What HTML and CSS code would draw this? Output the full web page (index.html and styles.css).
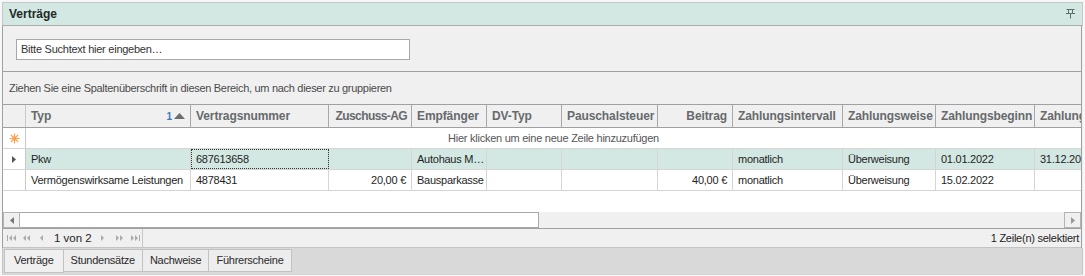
FILE: index.html
```html
<!DOCTYPE html>
<html lang="de">
<head>
<meta charset="utf-8">
<title>Verträge</title>
<link rel="stylesheet" href="styles.css">
</head>
<body>
<div class="window">
  <div class="titlebar">
    <span class="title">Verträge</span>
    <svg class="pin" width="9" height="10" viewBox="0 0 9 10"><path d="M0.5 0.5h8M2.5 0.5v4M6.5 0.5v4M0 4.5h9M4.5 4.5v5" stroke="#5d6f68" stroke-width="1" fill="none"/></svg>
  </div>
  <div class="panel">
    <div class="searcharea">
      <div class="searchbox">Bitte Suchtext hier eingeben…</div>
    </div>
    <div class="grouppanel">Ziehen Sie eine Spaltenüberschrift in diesen Bereich, um nach dieser zu gruppieren</div>
    <div class="grid">
      <div class="row header">
        <div class="c ind"></div>
        <div class="c typ">Typ<span class="sort"><span class="sortnum">1</span><svg width="11" height="6" viewBox="0 0 11 6"><path d="M5.5 0L11 6H0Z" fill="#6e6e6e"/></svg></span></div>
        <div class="c">Vertragsnummer</div>
        <div class="c r tight">Zuschuss-AG</div>
        <div class="c">Empfänger</div>
        <div class="c">DV-Typ</div>
        <div class="c">Pauschalsteuer</div>
        <div class="c r">Beitrag</div>
        <div class="c">Zahlungsintervall</div>
        <div class="c">Zahlungsweise</div>
        <div class="c">Zahlungsbeginn</div>
        <div class="c last">Zahlungsende</div>
      </div>
      <div class="row newrow">
        <div class="c ind"><svg width="11" height="11" viewBox="0 0 11 11"><g stroke="#f7a24f" stroke-width="1.2"><path d="M5.5 0.5v2.5M5.5 8v2.5M0.5 5.5h2.5M8 5.5h2.5M2 2l1.8 1.8M7.2 7.2L9 9M9 2L7.2 3.8M3.8 7.2L2 9"/></g><circle cx="5.5" cy="5.5" r="2.4" fill="#f7a24f"/></svg></div>
        <div class="newtext">Hier klicken um eine neue Zeile hinzuzufügen</div>
      </div>
      <div class="row data sel">
        <div class="c ind"><svg width="4" height="7" viewBox="0 0 4 7"><path d="M0 0L4 3.5L0 7Z" fill="#555"/></svg></div>
        <div class="c">Pkw</div>
        <div class="c focus">687613658</div>
        <div class="c r"></div>
        <div class="c">Autohaus M…</div>
        <div class="c"></div>
        <div class="c"></div>
        <div class="c r"></div>
        <div class="c">monatlich</div>
        <div class="c">Überweisung</div>
        <div class="c">01.01.2022</div>
        <div class="c last">31.12.2022</div>
      </div>
      <div class="row data">
        <div class="c ind"></div>
        <div class="c">Vermögenswirksame Leistungen</div>
        <div class="c">4878431</div>
        <div class="c r">20,00 €</div>
        <div class="c">Bausparkasse</div>
        <div class="c"></div>
        <div class="c"></div>
        <div class="c r">40,00 €</div>
        <div class="c">monatlich</div>
        <div class="c">Überweisung</div>
        <div class="c">15.02.2022</div>
        <div class="c last"></div>
      </div>
      <div class="gridempty"></div>
    </div>
    <div class="hscroll">
      <div class="sbtn"><svg width="4" height="7" viewBox="0 0 4 7"><path d="M4 0L0 3.5L4 7Z" fill="#777"/></svg></div>
      <div class="thumb"></div>
      <div class="track"></div>
      <div class="sbtn"><svg width="4" height="7" viewBox="0 0 4 7"><path d="M0 0L4 3.5L0 7Z" fill="#999"/></svg></div>
    </div>
    <div class="statusbar">
      <div class="pager">
        <svg class="pi p1" width="9" height="6" viewBox="0 0 9 6"><path d="M0.5 0v6" stroke="#aaa"/><path d="M5 0L2 3L5 6ZM9 0L6 3L9 6Z" fill="#aaa"/></svg>
        <svg class="pi p2" width="8" height="6" viewBox="0 0 8 6"><path d="M4 0L1 3L4 6ZM8 0L5 3L8 6Z" fill="#aaa"/></svg>
        <svg class="pi p3" width="4" height="6" viewBox="0 0 4 6"><path d="M3 0L0 3L3 6Z" fill="#aaa"/></svg>
        <span class="pagetext">1 von 2</span>
        <svg class="pi p4" width="4" height="6" viewBox="0 0 4 6"><path d="M0 0L3 3L0 6Z" fill="#aaa"/></svg>
        <svg class="pi p5" width="8" height="6" viewBox="0 0 8 6"><path d="M0 0L3 3L0 6ZM4 0L7 3L4 6Z" fill="#aaa"/></svg>
        <svg class="pi p6" width="9" height="6" viewBox="0 0 9 6"><path d="M0 0L3 3L0 6ZM4 0L7 3L4 6Z" fill="#aaa"/><path d="M8.5 0v6" stroke="#aaa"/></svg>
      </div>
      <div class="status">1 Zeile(n) selektiert</div>
    </div>
  </div>
  <div class="tabs">
    <div class="tab active">Verträge</div>
    <div class="tab">Stundensätze</div>
    <div class="tab">Nachweise</div>
    <div class="tab">Führerscheine</div>
  </div>
</div>
</body>
</html>
```
FILE: styles.css
```css
html, body {
  margin: 0;
  padding: 0;
  background: #f7f7f7;
}
body {
  font-family: "Liberation Sans", Arial, sans-serif;
  font-size: 11px;
  letter-spacing: -0.25px;
  color: #1e1e1e;
}
.window {
  margin: 2px 0 0 2px;
  width: 1081px;
  height: 272px;
  overflow: hidden;
  background: #f0f0f0;
  border-bottom: 1px solid #d6d6d6;
}
.titlebar {
  height: 22px;
  background: #d3e8e2;
  border: 1px solid #c3c9c7;
  border-bottom-color: #a9aeac;
  display: flex;
  align-items: center;
  justify-content: space-between;
  padding: 0 6px 0 6px;
}
.title {
  font-weight: bold;
  font-size: 12px;
  letter-spacing: 0;
  color: #1e2a26;
}
.pin { margin-right: 1px; }
.panel {
  width: 1078px;
  border-left: 1px solid #a0a0a0;
  border-right: 1px solid #a0a0a0;
  background: #f0f0f0;
}
.searcharea {
  height: 46px;
  border-bottom: 1px solid #a0a0a0;
  padding: 13px 0 0 13px;
  box-sizing: border-box;
}
.searchbox {
  width: 388px;
  height: 19px;
  background: #fff;
  border: 1px solid #a8a8a8;
  color: #333;
  padding-left: 4px;
  line-height: 19px;
  box-sizing: content-box;
}
.grouppanel {
  height: 32px;
  line-height: 33px;
  padding-left: 6px;
  color: #4a4a4a;
  letter-spacing: -0.3px;
}
.grid {
  background: #fff;
  border-top: 1px solid #a0a0a0;
}
.row {
  display: grid;
  grid-template-columns: 23px 165px 138px 83px 75px 75px 96px 75px 110px 93px 99px 46px;
  height: 21px;
  border-bottom: 1px solid #d5d5d5;
  box-sizing: border-box;
}
.row.header {
  height: 23px;
  background: #f0f0f0;
  border-bottom: 1px solid #a0a0a0;
}
.c {
  border-right: 1px solid #d5d5d5;
  padding: 0 5px;
  display: flex;
  align-items: center;
  white-space: nowrap;
  overflow: hidden;
  min-width: 0;
}
.header .c {
  border-right-color: #a8a8a8;
  font-weight: bold;
  font-size: 12px;
  letter-spacing: -0.1px;
  color: #666a6d;
}
.header .c.tight { letter-spacing: -0.6px; padding-right: 4px; }
.c.r { justify-content: flex-end; }
.c.last { border-right: none; }
.c.ind {
  padding: 0;
  justify-content: center;
  border-right-color: #c8c8c8;
  background: #fff;
}
.header .c.ind { background: #f0f0f0; border-right-color: #c8c8c8; }
.typ { justify-content: space-between; }
.sort {
  display: flex;
  align-items: center;
  gap: 2px;
}
.sortnum {
  color: #3f7ab8;
  font-size: 10px;
  font-weight: bold;
}
.newrow {
  grid-template-columns: 23px 1fr;
}
.newtext {
  display: flex;
  align-items: center;
  justify-content: center;
  color: #555;
}
.data.sel .c:not(.ind) { background: #d3e8e2; }
.c.focus { outline: 1px dotted #333; outline-offset: -1px; }
.gridempty { height: 21px; }
.hscroll {
  height: 16px;
  display: flex;
  background: #f0f0f0;
  border-bottom: 1px solid #a0a0a0;
}
.sbtn {
  width: 17px;
  height: 16px;
  box-sizing: border-box;
  border: 1px solid #b4b4b4;
  display: flex;
  align-items: center;
  justify-content: center;
  background: #f0f0f0;
}
.thumb {
  width: 519px;
  height: 16px;
  box-sizing: border-box;
  background: #fff;
  border: 1px solid #a8a8a8;
  border-left: none;
}
.track { flex: 1; }
.statusbar {
  height: 18px;
  display: flex;
  justify-content: space-between;
  align-items: stretch;
  background: #f0f0f0;
  border-bottom: 1px solid #c4c4c4;
}
.pager {
  display: flex;
  align-items: center;
  border-right: 1px solid #c8c8c8;
  padding: 0 2px 0 4px;
  color: #1e1e1e;
}
.p2 { margin-left: 6px; }
.p3 { margin-left: 10px; }
.pagetext {
  margin-left: 10px;
  font-size: 11.5px;
  letter-spacing: 0;
}
.p4 { margin-left: 9px; }
.p5 { margin-left: 11px; }
.p6 { margin-left: 7px; }
.status {
  display: flex;
  align-items: center;
  padding-right: 2px;
  color: #1e1e1e;
}
.tabs {
  height: 25px;
  background: #d9d9d9;
  display: flex;
  align-items: flex-start;
  padding: 1px 0 0 1px;
  border-left: 1px solid #c6c6c6;
  border-right: 1px solid #c6c6c6;
}
.tab {
  height: 21px;
  line-height: 21px;
  padding: 0 7px;
  background: #ededed;
  border: 1px solid #c2c2c2;
  border-left: none;
  color: #2a2a2a;
}
.tab:first-child { border-left: 1px solid #c2c2c2; }
.tab.active {
  height: 22px;
  background: #f0f0f0;
  padding: 0 9px;
}
```
